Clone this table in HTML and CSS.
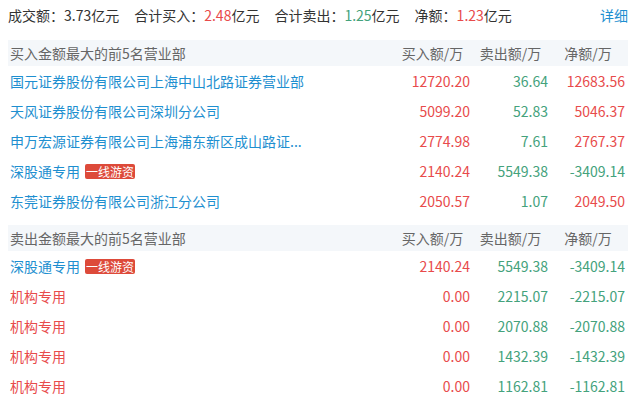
FILE: index.html
```html
<!DOCTYPE html>
<html lang="zh-CN">
<head>
<meta charset="utf-8">
<link rel="stylesheet" href="styles.css">
</head>
<body>
<div class="wrap">
  <div class="summary">
    <div class="stats">
      <span class="stat">成交额：<span class="num">3.73</span>亿元</span>
      <span class="stat">合计买入：<span class="num red">2.48</span>亿元</span>
      <span class="stat">合计卖出：<span class="num green">1.25</span>亿元</span>
      <span class="stat">净额：<span class="num red">1.23</span>亿元</span>
    </div>
    <a class="more">详细</a>
  </div>

  <div class="table">
    <div class="row head">
      <div class="name">买入金额最大的前5名营业部</div>
      <div class="col">买入额/万</div>
      <div class="col">卖出额/万</div>
      <div class="col">净额/万</div>
    </div>
    <div class="row">
      <div class="name link">国元证券股份有限公司上海中山北路证券营业部</div>
      <div class="col red">12720.20</div>
      <div class="col green">36.64</div>
      <div class="col red">12683.56</div>
    </div>
    <div class="row">
      <div class="name link">天风证券股份有限公司深圳分公司</div>
      <div class="col red">5099.20</div>
      <div class="col green">52.83</div>
      <div class="col red">5046.37</div>
    </div>
    <div class="row">
      <div class="name link">申万宏源证券有限公司上海浦东新区成山路证...</div>
      <div class="col red">2774.98</div>
      <div class="col green">7.61</div>
      <div class="col red">2767.37</div>
    </div>
    <div class="row">
      <div class="name link">深股通专用<span class="badge">一线游资</span></div>
      <div class="col red">2140.24</div>
      <div class="col green">5549.38</div>
      <div class="col green">-3409.14</div>
    </div>
    <div class="row">
      <div class="name link">东莞证券股份有限公司浙江分公司</div>
      <div class="col red">2050.57</div>
      <div class="col green">1.07</div>
      <div class="col red">2049.50</div>
    </div>
  </div>

  <div class="table second">
    <div class="row head">
      <div class="name">卖出金额最大的前5名营业部</div>
      <div class="col">买入额/万</div>
      <div class="col">卖出额/万</div>
      <div class="col">净额/万</div>
    </div>
    <div class="row">
      <div class="name link">深股通专用<span class="badge">一线游资</span></div>
      <div class="col red">2140.24</div>
      <div class="col green">5549.38</div>
      <div class="col green">-3409.14</div>
    </div>
    <div class="row">
      <div class="name red">机构专用</div>
      <div class="col red">0.00</div>
      <div class="col green">2215.07</div>
      <div class="col green">-2215.07</div>
    </div>
    <div class="row">
      <div class="name red">机构专用</div>
      <div class="col red">0.00</div>
      <div class="col green">2070.88</div>
      <div class="col green">-2070.88</div>
    </div>
    <div class="row">
      <div class="name red">机构专用</div>
      <div class="col red">0.00</div>
      <div class="col green">1432.39</div>
      <div class="col green">-1432.39</div>
    </div>
    <div class="row">
      <div class="name red">机构专用</div>
      <div class="col red">0.00</div>
      <div class="col green">1162.81</div>
      <div class="col green">-1162.81</div>
    </div>
  </div>
</div>
</body>
</html>
```

FILE: styles.css
```css
* { box-sizing: border-box; }
html, body {
  margin: 0;
  padding: 0;
  background: #fff;
}
body {
  font-family: "Noto Sans CJK SC", "Noto Sans", sans-serif;
  font-size: 14px;
  color: #333;
}
.wrap {
  width: 620px;
  margin-left: 8px;
}
.summary {
  height: 30px;
  display: flex;
  align-items: center;
  justify-content: space-between;
}
.stats {
  display: flex;
  gap: 15px;
}
.more {
  color: #1e8fd0;
  cursor: pointer;
}
.table {
  margin-top: 10px;
}
.table.second {
  margin-top: 9px;
}
.row {
  display: grid;
  grid-template-columns: 1fr 78px 78px 77px;
  height: 30px;
  align-items: center;
}
.row.head {
  height: 26px;
  background: #f4f7fa;
  color: #666;
}
.row.head .col {
  text-align: center;
}
.name {
  padding-left: 2px;
  white-space: nowrap;
  display: flex;
  align-items: center;
}
.col {
  text-align: right;
  padding-right: 3px;
}
.link { color: #1e8fd0; }
.red { color: #e84b4b; }
.green { color: #44a27c; }
.badge {
  display: inline-block;
  margin-left: 5px;
  background: #dd4a3a;
  color: #fff;
  font-size: 12px;
  line-height: 15px;
  height: 15px;
  padding: 0 1px;
  border-radius: 2px;
}
```
